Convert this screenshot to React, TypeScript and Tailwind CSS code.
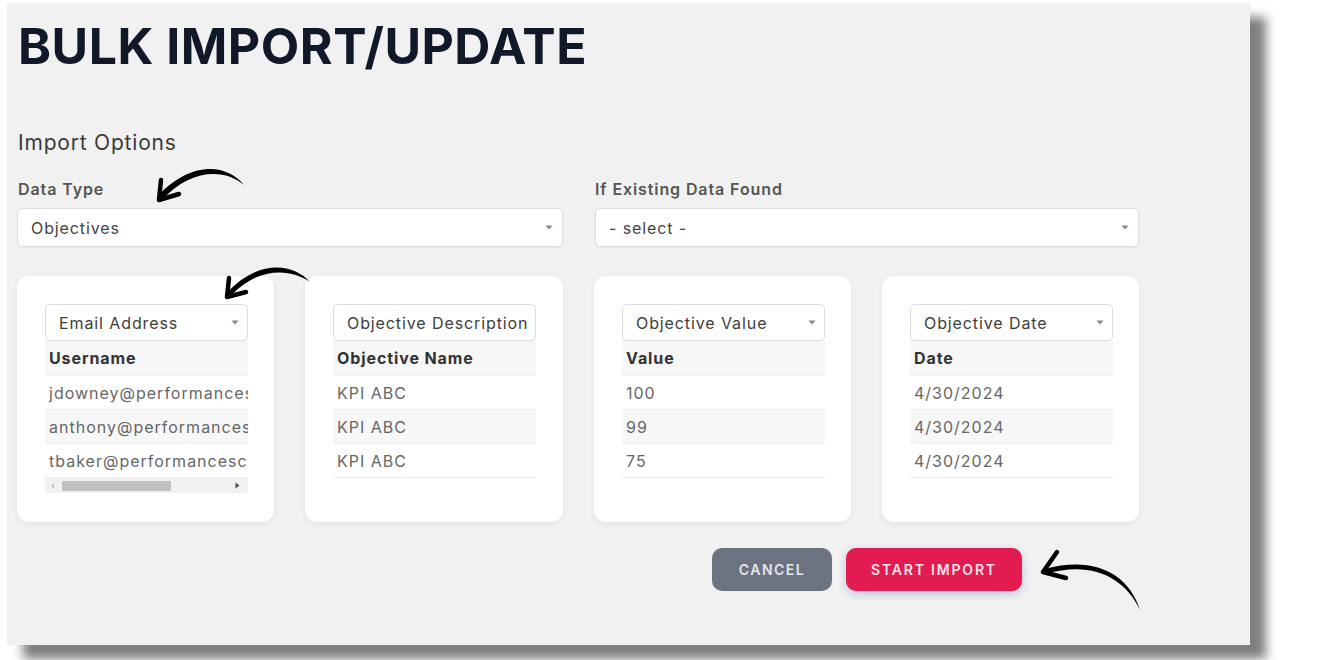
import { ChevronLeft } from 'lucide-react';

const font = { fontFamily: 'Inter, "Noto Sans", sans-serif' };

type Column = {
  field: string;
  header: string;
  rows: string[];
  caret?: boolean;
  scroll?: boolean;
};

const columns: Column[] = [
  {
    field: 'Email Address',
    header: 'Username',
    rows: ['jdowney@performancescore.com', 'anthony@performancescore.com', 'tbaker@performancescore.com'],
    caret: true,
    scroll: true,
  },
  {
    field: 'Objective Description',
    header: 'Objective Name',
    rows: ['KPI ABC', 'KPI ABC', 'KPI ABC'],
  },
  { field: 'Objective Value', header: 'Value', rows: ['100', '99', '75'], caret: true },
  { field: 'Objective Date', header: 'Date', rows: ['4/30/2024', '4/30/2024', '4/30/2024'], caret: true },
];

function Caret() {
  return (
    <svg width="8" height="5" viewBox="0 0 8 5" className="shrink-0">
      <path d="M0.5 0.5h7L4 4.5z" fill="#8a8a8a" />
    </svg>
  );
}

function SelectBox({ value }: { value: string }) {
  return (
    <div className="h-[39px] bg-white border border-[#dedede] rounded-[5px] flex items-center justify-between pl-[13px] pr-[9px] shadow-[0_1px_1px_rgba(0,0,0,0.04)]">
      <span className="text-[16px] text-[#444] tracking-[0.9px]">{value}</span>
      <Caret />
    </div>
  );
}

function ColumnCard({ col }: { col: Column }) {
  return (
    <div className="bg-white rounded-[12px] h-[246px] pt-[28px] pl-[28px] shadow-[0_2px_6px_rgba(0,0,0,0.06)]">
      <div className="w-[203px] overflow-hidden">
        <div className="h-[37px] border border-[#dcdcdc] rounded-[5px] flex items-center justify-between pl-[13px] pr-[8px] shadow-[0_1px_2px_rgba(0,0,0,0.08)]">
          <span className="text-[16px] text-[#3d3d3d] whitespace-nowrap tracking-[0.9px] overflow-hidden">{col.field}</span>
          {col.caret && <Caret />}
        </div>
        <div className="h-[35px] bg-[#f7f7f7] flex items-center pl-[4px] border-b border-[#eceef4]">
          <span className="text-[16px] font-bold text-[#333] whitespace-nowrap tracking-[0.9px]">{col.header}</span>
        </div>
        {col.rows.map((r, i) => (
          <div
            key={i}
            className={`h-[34px] flex items-center pl-[4px] border-b border-[#eceef4] overflow-hidden ${i === 1 ? 'bg-[#f7f7f7]' : 'bg-white'}`}
          >
            <span className="text-[16px] text-[#666] whitespace-nowrap tracking-[1px]">{r}</span>
          </div>
        ))}
        {col.scroll && (
          <div className="h-[15px] bg-[#f1f1f1] flex items-center px-[4px] gap-[5px]">
            <ChevronLeft size={8} strokeWidth={3} color="#a0a0a0" className="shrink-0" />
            <div className="w-[109px] h-[10px] bg-[#c1c1c1]" />
            <div className="flex-1" />
            <svg width="5" height="7" viewBox="0 0 5 7" className="shrink-0 mr-[4px]">
              <path d="M0.5 0.5L4.5 3.5L0.5 6.5z" fill="#505050" />
            </svg>
          </div>
        )}
      </div>
    </div>
  );
}

function Arrows() {
  return (
    <svg width="1320" height="660" viewBox="0 0 1320 660" className="absolute top-0 left-0 pointer-events-none">
      {/* data type arrow */}
      <path d="M244 185 C226 163 190 161 157 197 L162 200 C190 169 224 168 244 185 Z" fill="#000" />
      <path d="M159 200 L161 180 M159 200 L179 194" stroke="#000" strokeWidth="4.5" strokeLinecap="round" fill="none" />
      {/* email column arrow */}
      <path d="M310 282 C292 262 256 260 226 294 L230 297 C256 267 290 268 310 282 Z" fill="#000" />
      <path d="M227 297 L229 278 M227 297 L246 292" stroke="#000" strokeWidth="4.5" strokeLinecap="round" fill="none" />
      {/* start import arrow */}
      <path d="M1140 610 C1128 572 1092 556 1045 569 L1046 574 C1090 561 1124 576 1140 610 Z" fill="#000" />
      <path d="M1043 572 L1057 552 M1043 572 L1066 578" stroke="#000" strokeWidth="4.5" strokeLinecap="round" fill="none" />
    </svg>
  );
}

export default function App() {
  return (
    <div className="relative w-[1320px] h-[660px] bg-white overflow-hidden" style={font}>
      <div className="ml-[7px] mt-[3px] w-[1243px] h-[642px] bg-[#f1f1f1] shadow-[16px_14px_10px_#7f7f7f] pl-[10px] pt-[18px]">
        <h1 className="text-[50px] leading-none font-bold text-[#111827] tracking-[0.5px] pl-[1px]">
          BULK IMPORT/UPDATE
        </h1>

        <div className="mt-[61px] text-[21px] text-[#3a3a3a] leading-none tracking-[0.8px] pl-[1px]">Import Options</div>

        <div className="grid grid-cols-[546px_544px] gap-x-[32px] mt-[28px]">
          <div>
            <div className="text-[16px] font-semibold text-[#555] leading-none mb-[11px] pl-[1px] tracking-[0.9px]">Data Type</div>
            <SelectBox value="Objectives" />
          </div>
          <div>
            <div className="text-[16px] font-semibold text-[#555] leading-none mb-[11px] tracking-[0.9px]">If Existing Data Found</div>
            <SelectBox value="- select -" />
          </div>
        </div>

        <div className="grid grid-cols-[257px_258px_257px_257px] gap-x-[31px] mt-[29px] w-[1122px]">
          {columns.map(c => (
            <ColumnCard key={c.field} col={c} />
          ))}
        </div>

        <div className="flex justify-end gap-[14px] mt-[26px] w-[1005px]">
          <button className="w-[120px] h-[43px] rounded-[10px] bg-[#6b7380] text-[#e4e6ea] text-[14px] font-semibold tracking-[1.5px]">
            CANCEL
          </button>
          <button className="w-[176px] h-[43px] rounded-[10px] bg-[#e21b50] text-[#fbe3ea] text-[14px] font-semibold tracking-[1.8px] shadow-[0_3px_8px_rgba(90,110,190,0.35)]">
            START IMPORT
          </button>
        </div>
      </div>
      <Arrows />
    </div>
  );
}
